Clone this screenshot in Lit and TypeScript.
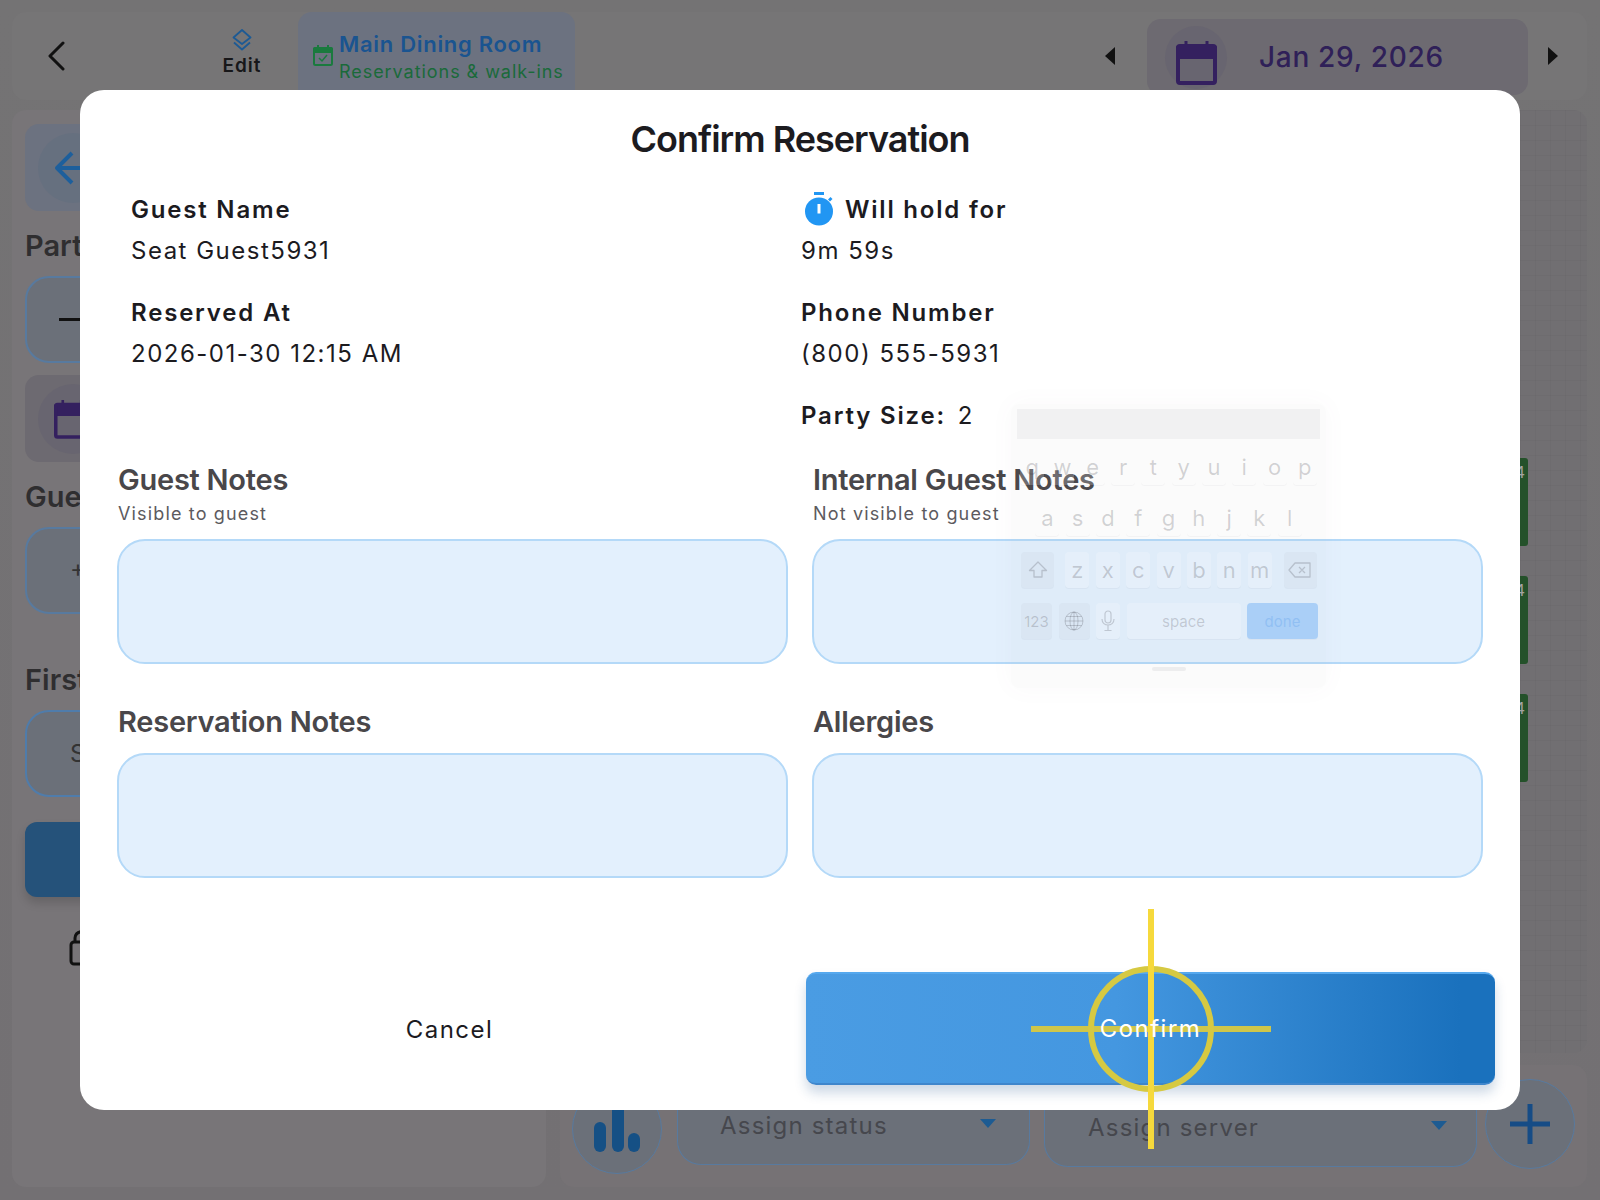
import { LitElement, html, css } from 'lit';
import { customElement } from 'lit/decorators.js';

const calendarIcon = (w: number, h: number, c: string) => html`
  <svg width=${w} height=${h} viewBox="0 0 41 45" fill="none">
    <path d="M10 1v8M31 1v8" stroke=${c} stroke-width="3"/>
    <path d="M0 8a3 3 0 0 1 3-3h35a3 3 0 0 1 3 3v11H0z" fill=${c}/>
    <rect x="2" y="6" width="37" height="37" rx="2" stroke=${c} stroke-width="4"/>
  </svg>`;

const KEY_ROWS = ['qwertyuiop', 'asdfghjkl', 'zxcvbnm'];

@customElement('ghost-keyboard')
export class GhostKeyboard extends LitElement {
  static styles = css`
    :host {
      display: block;
      position: absolute;
      left: 1011px;
      top: 404px;
      width: 315px;
      height: 284px;
      box-sizing: border-box;
      padding: 5px 6px 0;
      background: rgba(120, 120, 130, 0.03);
      border-radius: 8px;
      box-shadow: 0 0 24px rgba(120, 110, 130, 0.04);
      font-family: Inter, 'Liberation Sans', sans-serif;
      color: rgba(60, 60, 70, 0.22);
    }
    .bar {
      height: 30px;
      background: rgba(60, 60, 70, 0.05);
      margin-bottom: 10px;
    }
    .row {
      display: flex;
      justify-content: center;
      gap: 6.3px;
      height: 36px;
      margin-bottom: 15px;
    }
    .key {
      flex: none;
      width: 24px;
      height: 36px;
      border-radius: 4px;
      background: rgba(255, 255, 255, 0.2);
      box-shadow: 0 1px 0 rgba(60, 60, 70, 0.04);
      display: flex;
      align-items: center;
      justify-content: center;
      font-size: 22px;
      line-height: 1;
    }
    .row.last {
      gap: 6.5px;
      justify-content: flex-start;
      padding-left: 4px;
    }
    .row.third {
      justify-content: flex-start;
      padding-left: 4px;
      gap: 6.4px;
      margin-top: 16px;
    }
    .dark {
      background: rgba(60, 60, 70, 0.03);
    }
    .wide {
      width: 33px;
    }
    .mid {
      width: 31px;
    }
    .z {
      margin-left: 5px;
    }
    .bs {
      margin-left: 5.6px;
    }
    .small {
      font-size: 15px;
    }
    .space {
      width: 114px;
    }
    .done {
      width: 71px;
      background: rgba(84, 160, 245, 0.38);
      color: rgba(120, 175, 240, 0.5);
    }
    .grip {
      width: 34px;
      height: 4px;
      margin: 28px auto 0;
      border-radius: 2px;
      background: rgba(60, 60, 70, 0.07);
    }
  `;

  render() {
    return html`
      <div class="bar"></div>
      ${KEY_ROWS.slice(0, 2).map(
        (r) => html`<div class="row">${[...r].map((k) => html`<span class="key">${k}</span>`)}</div>`
      )}
      <div class="row third">
        <span class="key wide dark">
          <svg width="20" height="20" viewBox="0 0 20 20" fill="none" stroke="currentColor" stroke-width="1.3">
            <path d="M10 2 1.5 10.5H6V17h8v-6.5h4.500z" stroke-linejoin="round"/>
          </svg>
        </span>
        ${[...KEY_ROWS[2]].map((k, i) => html`<span class="key ${i === 0 ? 'z' : ''}">${k}</span>`)}
        <span class="key wide dark bs">
          <svg width="24" height="18" viewBox="0 0 24 18" fill="none" stroke="currentColor" stroke-width="1.3">
            <path d="M7 2h15v14H7L1 9zM11 6l6 6M17 6l-6 6" stroke-linejoin="round"/>
          </svg>
        </span>
      </div>
      <div class="row last">
        <span class="key small dark mid">123</span>
        <span class="key dark mid">
          <svg width="20" height="20" viewBox="0 0 20 20" fill="none" stroke="currentColor" stroke-width="1">
            <circle cx="10" cy="10" r="9"/>
            <ellipse cx="10" cy="10" rx="4" ry="9"/>
            <path d="M10 1v18M1 10h18M2.500 5.500h15M2.500 14.500h15"/>
          </svg>
        </span>
        <span class="key">
          <svg width="14" height="22" viewBox="0 0 14 22" fill="none" stroke="currentColor" stroke-width="1.2">
            <rect x="4" y="1" width="6" height="12" rx="3"/>
            <path d="M1 9c0 8 12 8 12 0M7 15v5M3.500 20.500h7"/>
          </svg>
        </span>
        <span class="key small space">space</span>
        <span class="key small done">done</span>
      </div>
      <div class="grip"></div>
    `;
  }
}

@customElement('app-root')
export class AppRoot extends LitElement {
  static styles = css`
    :host {
      display: block;
      position: relative;
      width: 1600px;
      height: 1200px;
      overflow: hidden;
      background: linear-gradient(#747374, #737073);
      font-family: Inter, 'Liberation Sans', sans-serif;
    }

    /* dimmed page behind the dialog */
    .page {
      display: flex;
      flex-direction: column;
      gap: 10px;
      height: 1200px;
      box-sizing: border-box;
      padding: 12px 13px 13px 12px;
    }
    .topbar {
      display: flex;
      align-items: center;
      height: 88px;
      flex: none;
      background: #767576;
      border-radius: 14px;
    }
    .back {
      margin-left: 35px;
      width: 18px;
      height: 30px;
    }
    .edit {
      margin-left: 147px;
      width: 60px;
      display: flex;
      flex-direction: column;
      align-items: center;
      gap: 4px;
      font-size: 19px;
      font-weight: 600;
      letter-spacing: 1px;
      line-height: 22px;
      color: #171719;
      margin-bottom: 6px;
    }
    .room {
      margin-left: 26px;
      width: 277px;
      height: 88px;
      box-sizing: border-box;
      padding: 18px 0 0 15px;
      display: flex;
      gap: 6px;
      align-items: flex-start;
      background: #6c7280;
      border-radius: 14px 14px 0 0;
      align-self: flex-start;
    }
    .room svg {
      margin-top: 15px;
    }
    .room-title {
      font-size: 22px;
      font-weight: 600;
      letter-spacing: 0.7px;
      line-height: 28px;
      color: #1a5490;
    }
    .room-sub {
      font-size: 18px;
      letter-spacing: 0.95px;
      line-height: 28px;
      color: #1a6a3a;
    }
    .nav-l {
      margin-left: auto;
      width: 0;
      height: 0;
      border-style: solid;
      border-width: 9px 10px 9px 0;
      border-color: transparent #111 transparent transparent;
    }
    .date {
      margin-left: 32px;
      width: 381px;
      height: 76px;
      margin-top: 2px;
      display: flex;
      align-items: center;
      background: #6d6a71;
      border-radius: 14px;
    }
    .date-circle {
      margin-left: 18px;
      width: 62px;
      height: 63px;
      border-radius: 50%;
      background: #686570;
      display: flex;
      align-items: center;
      justify-content: center;
      padding-top: 10px;
      box-sizing: border-box;
    }
    .date-text {
      margin-left: 32px;
      font-size: 28px;
      font-weight: 500;
      letter-spacing: 0.7px;
      color: #2f2058;
    }
    .nav-r {
      margin: 0 29px 0 20px;
      width: 0;
      height: 0;
      border-style: solid;
      border-width: 9px 0 9px 10px;
      border-color: transparent transparent transparent #111;
    }

    .body {
      flex: 1;
      display: flex;
      gap: 14px;
      min-height: 0;
    }
    .left {
      width: 534px;
      box-sizing: border-box;
      padding: 14px 13px 0;
      display: flex;
      flex-direction: column;
      background: #787578;
      border-radius: 14px;
    }
    .tile {
      height: 87px;
      flex: none;
      display: flex;
      align-items: center;
      border-radius: 14px;
      padding-left: 13px;
      box-sizing: border-box;
    }
    .tile.blue {
      background: #6c7280;
    }
    .tile.purple {
      background: #6d6a71;
      margin-top: 12px;
    }
    .disc {
      width: 70px;
      height: 70px;
      border-radius: 50%;
      background: #66707f;
      display: flex;
      align-items: center;
      padding-left: 16px;
      box-sizing: border-box;
    }
    .tile.purple .disc {
      background: #686570;
    }
    .lab {
      font-size: 29px;
      font-weight: 600;
      line-height: 36px;
      color: #2f2e30;
      margin-top: 17px;
      margin-bottom: 12px;
    }
    .lab.first {
      margin-top: 48px;
      margin-bottom: 12px;
    }
    .field {
      height: 87px;
      flex: none;
      box-sizing: border-box;
      border: 2px solid #587a9f;
      border-radius: 24px;
      background: #6b7079;
      display: flex;
      align-items: center;
      padding-left: 43px;
      font-size: 24px;
      color: #333;
    }
    .field.minus {
      padding-left: 32px;
    }
    .field.focus {
      border-color: #4f7cab;
    }
    .submit {
      flex: none;
      margin-top: 25px;
      height: 75px;
      border-radius: 12px;
      background: #25527a;
      box-shadow: 0 6px 10px rgba(0, 0, 0, 0.15);
    }
    .lock {
      margin: 33px 0 0 44px;
    }
    .right {
      flex: 1;
      display: flex;
      flex-direction: column;
      gap: 12px;
      min-width: 0;
    }
    .grid {
      flex: 1;
      box-sizing: border-box;
      padding: 348px 59px 0 0;
      display: flex;
      flex-direction: column;
      align-items: flex-end;
      gap: 30px;
      border-radius: 14px;
      background-color: #716f72;
      background-image: linear-gradient(rgba(0, 0, 0, 0.025) 1px, transparent 1px),
        linear-gradient(90deg, rgba(0, 0, 0, 0.025) 1px, transparent 1px);
      background-size: 15px 15px;
    }
    .block {
      width: 100px;
      height: 88px;
      box-sizing: border-box;
      padding: 5px 3px 0 0;
      text-align: right;
      font-size: 16px;
      line-height: 18px;
      color: #a4a4a4;
      background: #24512a;
      border-radius: 3px;
    }
    .footer {
      height: 122px;
      flex: none;
      display: flex;
      align-items: flex-end;
      box-sizing: border-box;
      padding: 0 12px 7px 12px;
      background: #767275;
      border-radius: 14px;
    }
    .circle {
      flex: none;
      box-sizing: border-box;
      width: 90px;
      height: 90px;
      border-radius: 50%;
      border: 1.500px solid #587a9f;
      background: #6b7079;
      display: flex;
      align-items: center;
      justify-content: center;
    }
    .chart {
      margin-bottom: 6px;
      margin-right: 15px;
    }
    .chart svg {
      margin-bottom: 18px;
    }
    .plus {
      margin-left: 8px;
      margin-bottom: 11px;
    }
    .select {
      box-sizing: border-box;
      height: 80px;
      border: 1.500px solid #587a9f;
      border-top: none;
      border-radius: 0 0 24px 24px;
      background: #6b7079;
      display: flex;
      align-items: center;
      font-size: 24px;
      letter-spacing: 1.2px;
      color: #46474d;
    }
    .select::after {
      content: '';
      width: 0;
      height: 0;
      border-style: solid;
      border-width: 9px 8px 0;
      border-color: #1d5b92 transparent transparent;
      margin-left: auto;
      margin-bottom: 5px;
    }
    .status {
      width: 353px;
      margin-bottom: 15px;
      padding: 2px 33px 0 42px;
      margin-right: 14px;
    }
    .server {
      width: 433px;
      margin-bottom: 13px;
      padding: 2px 29px 0 43px;
    }

    /* dialog */
    .modal {
      position: absolute;
      left: 80px;
      top: 90px;
      width: 1440px;
      height: 1020px;
      box-sizing: border-box;
      padding-top: 19px;
      display: flex;
      flex-direction: column;
      background: #fff;
      border-radius: 24px;
    }
    h1 {
      margin: 0;
      height: 60px;
      font-size: 36px;
      font-weight: 600;
      letter-spacing: -1px;
      line-height: 60px;
      text-align: center;
      color: #1c1b1f;
    }
    .info {
      margin-top: 20px;
      padding-left: 51px;
      display: grid;
      grid-template-columns: 670px 1fr;
      color: #1c1b1f;
      font-size: 24px;
      line-height: 41px;
      letter-spacing: 1.5px;
    }
    .info-col {
      display: flex;
      flex-direction: column;
      gap: 21px;
    }
    .k {
      font-weight: 600;
      letter-spacing: 1.8px;
    }
    .v {
      font-weight: 400;
    }
    .size {
      margin-left: 12px;
    }
    .hold {
      display: flex;
      align-items: center;
      gap: 12px;
    }
    .hold svg {
      margin: -2px 0 0 4px;
    }
    .notes {
      margin-top: 26px;
      padding: 0 37px;
      display: grid;
      grid-template-columns: 671px 671px;
      column-gap: 24px;
      row-gap: 40px;
    }
    .note-head {
      display: flex;
      flex-direction: column;
      min-height: 77px;
      padding-left: 1px;
    }
    .note-head.short {
      min-height: 49px;
    }
    .note-title {
      font-size: 29px;
      font-weight: 600;
      letter-spacing: -0.25px;
      line-height: 36px;
      color: #49474a;
    }
    .note-sub {
      margin-top: 5px;
      font-size: 18px;
      line-height: 22px;
      letter-spacing: 1.15px;
      color: #5c5a5e;
    }
    .box {
      height: 125px;
      box-sizing: border-box;
      background: #e3f0fd;
      border: 2px solid #b4d9f8;
      border-radius: 28px;
    }
    .actions {
      margin-top: auto;
      margin-bottom: 25px;
      padding: 0 25px 0 14px;
      display: grid;
      grid-template-columns: 709px 689px;
      column-gap: 3px;
      align-items: center;
    }
    .cancel {
      padding: 2px 0 0 2px;
      text-align: center;
      font-size: 24px;
      letter-spacing: 1.5px;
      color: #1c1b1f;
    }
    .confirm {
      height: 113px;
      border-radius: 10px;
      border-top: 2px solid #55a8ee;
      border-bottom: 2px solid #3f86cc;
      box-sizing: border-box;
      display: flex;
      align-items: center;
      justify-content: center;
      font-size: 24px;
      letter-spacing: 1.5px;
      color: #fff;
      background: linear-gradient(90deg, #4a9ce3, #4497e0 45%, #1a71bd 95%);
      box-shadow: 0 8px 12px rgba(30, 80, 140, 0.22);
    }
    /* label stays readable above the touch marker */
    .confirm span {
      position: relative;
      z-index: 2;
    }

    /* touch marker */
    .touch {
      position: absolute;
      z-index: 1;
      left: 1031px;
      top: 909px;
      width: 240px;
      height: 240px;
    }
  `;

  render() {
    return html`
      <div class="page">
        <div class="topbar">
          <svg class="back" viewBox="0 0 18 30" fill="none" stroke="#111" stroke-width="3" stroke-linecap="round" stroke-linejoin="round">
            <path d="M16 2 3 15l13 13"/>
          </svg>
          <div class="edit">
            <svg width="20" height="22" viewBox="0 0 20 22" fill="none" stroke="#1d5a94" stroke-width="1.800" stroke-linejoin="round">
              <path d="M10 1 18.500 8.500 10 15 1.500 8.500z"/>
              <path d="M2 13.500 10 20.500l8-7"/>
            </svg>
            Edit
          </div>
          <div class="room">
            <svg width="20" height="21" viewBox="0 0 20 21" fill="none" stroke="#1a7a3e">
              <path d="M5 0v4M15 0v4" stroke-width="2"/>
              <path d="M0 4a2 2 0 0 1 2-2h16a2 2 0 0 1 2 2v4H0z" fill="#1a7a3e" stroke="none"/>
              <rect x="1" y="3" width="18" height="17" rx="1.500" stroke-width="2"/>
              <path d="m6 13 3 3 5-6" stroke-width="1.500"/>
            </svg>
            <div>
              <div class="room-title">Main Dining Room</div>
              <div class="room-sub">Reservations &amp; walk-ins</div>
            </div>
          </div>
          <div class="nav-l"></div>
          <div class="date">
            <div class="date-circle">${calendarIcon(41, 45, '#34205f')}</div>
            <div class="date-text">Jan 29, 2026</div>
          </div>
          <div class="nav-r"></div>
        </div>
        <div class="body">
          <div class="left">
            <div class="tile blue">
              <div class="disc">
                <svg width="32" height="34" viewBox="0 0 32 34" fill="none" stroke="#1d5f9c" stroke-width="4" stroke-linejoin="round">
                  <path d="M18 2 3 17l15 15M3 17h28"/>
                </svg>
              </div>
            </div>
            <div class="lab">Party</div>
            <div class="field minus">
              <svg width="24" height="4"><rect width="24" height="3" fill="#111"/></svg>
            </div>
            <div class="tile purple">
              <div class="disc">${calendarIcon(36, 44, '#34205f')}</div>
            </div>
            <div class="lab">Guest</div>
            <div class="field">+1</div>
            <div class="lab first">First</div>
            <div class="field focus">Seat</div>
            <div class="submit"></div>
            <svg class="lock" width="30" height="36" viewBox="0 0 30 36" fill="none" stroke="#111" stroke-width="3">
              <rect x="2" y="12" width="26" height="22" rx="3"/>
              <path d="M6 12V8a7 7 0 0 1 13-3"/>
              <circle cx="15" cy="23" r="2" fill="#111" stroke="none"/>
            </svg>
          </div>
          <div class="right">
            <div class="grid">
              ${[0, 1, 2].map(() => html`<div class="block">4</div>`)}
            </div>
            <div class="footer">
              <div class="circle chart">
                <svg width="46" height="64" viewBox="0 0 46 64" fill="#155085">
                  <rect x="0" y="34" width="12" height="30" rx="6"/>
                  <rect x="18" y="0" width="12" height="64" rx="6"/>
                  <rect x="34" y="45" width="12" height="19" rx="6"/>
                </svg>
              </div>
              <div class="select status">Assign status</div>
              <div class="select server">Assign server</div>
              <div class="circle plus">
                <svg width="40" height="40" viewBox="0 0 40 40" fill="#164c86">
                  <path d="M17.500 0h5v17.500H40v5H22.500V40h-5V22.500H0v-5h17.500z"/>
                </svg>
              </div>
            </div>
          </div>
        </div>
      </div>

      <div class="modal">
        <h1>Confirm Reservation</h1>
        <div class="info">
          <div class="info-col">
            <div>
              <div class="k">Guest Name</div>
              <div class="v">Seat Guest5931</div>
            </div>
            <div>
              <div class="k">Reserved At</div>
              <div class="v">2026-01-30 12:15 AM</div>
            </div>
          </div>
          <div class="info-col">
            <div>
              <div class="k hold">
                <svg width="28" height="34" viewBox="0 0 28 34" fill="#2196f3">
                  <rect x="9" y="0" width="10" height="3"/>
                  <path d="M23 7.500 25.500 5l2 2-2.500 2.500z"/>
                  <circle cx="14" cy="19.500" r="14"/>
                  <rect x="12.500" y="12" width="3" height="9.500" fill="#fff"/>
                </svg>
                Will hold for
              </div>
              <div class="v">9m 59s</div>
            </div>
            <div>
              <div class="k">Phone Number</div>
              <div class="v">(800) 555-5931</div>
            </div>
            <div><span class="k">Party Size:</span><span class="v size">2</span></div>
          </div>
        </div>
        <div class="notes">
          <div>
            <div class="note-head">
              <div class="note-title">Guest Notes</div>
              <div class="note-sub">Visible to guest</div>
            </div>
            <div class="box"></div>
          </div>
          <div>
            <div class="note-head">
              <div class="note-title">Internal Guest Notes</div>
              <div class="note-sub">Not visible to guest</div>
            </div>
            <div class="box"></div>
          </div>
          <div>
            <div class="note-head short"><div class="note-title">Reservation Notes</div></div>
            <div class="box"></div>
          </div>
          <div>
            <div class="note-head short"><div class="note-title">Allergies</div></div>
            <div class="box"></div>
          </div>
        </div>
        <div class="actions">
          <div class="cancel">Cancel</div>
          <div class="confirm"><span>Confirm</span></div>
        </div>
      </div>

      <ghost-keyboard></ghost-keyboard>

      <svg class="touch" viewBox="0 0 240 240" fill="none">
        <path d="M0 120h240" stroke="#cfc64a" stroke-width="6"/>
        <circle cx="120" cy="120" r="60" stroke="#d6c942" stroke-width="6"/>
        <path d="M120 0v240" stroke="#f6d93c" stroke-width="6"/>
      </svg>
    `;
  }
}
